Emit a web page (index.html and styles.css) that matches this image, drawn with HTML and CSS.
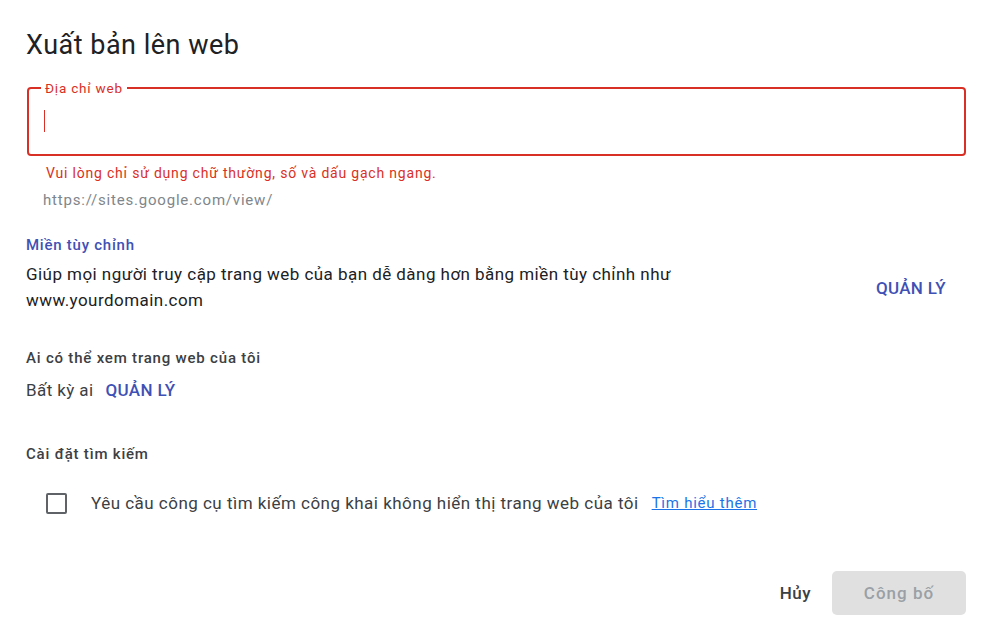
FILE: index.html
```html
<!DOCTYPE html>
<html lang="vi">
<head>
<meta charset="utf-8">
<title>Xuất bản lên web</title>
<link rel="stylesheet" href="styles.css">
</head>
<body>
<div class="dialog">
  <h1 class="title">Xuất bản lên web</h1>

  <fieldset class="field">
    <legend class="field-label">Địa chỉ web</legend>
    <span class="caret"></span>
  </fieldset>
  <div class="error">Vui lòng chỉ sử dụng chữ thường, số và dấu gạch ngang.</div>
  <div class="prefix">https://sites.google.com/view/</div>

  <div class="section-blue">Miền tùy chỉnh</div>
  <div class="domain-row">
    <p class="domain-text">Giúp mọi người truy cập trang web của bạn dễ dàng hơn bằng miền tùy chỉnh như www.yourdomain.com</p>
    <span class="manage manage-right">QUẢN LÝ</span>
  </div>

  <div class="section">Ai có thể xem trang web của tôi</div>
  <div class="viewers">
    <span class="body-text">Bất kỳ ai</span>
    <span class="manage">QUẢN LÝ</span>
  </div>

  <div class="section section-search">Cài đặt tìm kiếm</div>
  <div class="check-row">
    <span class="checkbox"></span>
    <span class="check-label">Yêu cầu công cụ tìm kiếm công khai không hiển thị trang web của tôi</span>
    <a class="learn" href="#">Tìm hiểu thêm</a>
  </div>

  <div class="actions">
    <span class="btn-cancel">Hủy</span>
    <span class="btn-publish">Công bố</span>
  </div>
</div>
</body>
</html>
```

FILE: styles.css
```css
* { box-sizing: border-box; }
html, body {
  margin: 0;
  padding: 0;
  background: #ffffff;
}
body {
  font-family: Roboto, "Liberation Sans", sans-serif;
  color: #202124;
}
.dialog {
  padding: 29px 24px 0 26px;
}
.title {
  margin: 0;
  font-size: 27px;
  font-weight: 400;
  line-height: 32px;
  letter-spacing: 0.5px;
  color: #202124;
}
.field {
  margin: 20px 0 0 1px;
  border: 2px solid #d93025;
  border-radius: 4px;
  padding: 15px 14px 19px 14px;
  height: 75px;
  min-width: 0;
}
.field-label {
  padding: 0 4px;
  margin-left: -2px;
  font-size: 13.5px;
  line-height: 14px;
  letter-spacing: 0.8px;
  color: #d93025;
}
.caret {
  display: block;
  width: 1px;
  height: 22px;
  background: #d93025;
  margin-left: 1px;
}
.error {
  margin: 9px 0 0 20px;
  font-size: 14px;
  line-height: 16px;
  letter-spacing: 0.8px;
  color: #d93025;
}
.prefix {
  margin: 10px 0 0 17px;
  font-size: 15px;
  line-height: 18px;
  letter-spacing: 0.8px;
  color: #80868b;
}
.section-blue {
  margin-top: 26px;
  font-size: 15px;
  font-weight: 500;
  line-height: 20px;
  letter-spacing: 0.75px;
  color: #3f51b5;
}
.domain-row {
  display: flex;
  align-items: center;
  justify-content: space-between;
  margin-top: 6px;
}
.domain-text {
  margin: 0;
  max-width: 700px;
  font-size: 17px;
  line-height: 26px;
  letter-spacing: 0.45px;
  color: #202124;
}
.manage {
  font-size: 17px;
  font-weight: 500;
  line-height: 24px;
  color: #3f51b5;
  letter-spacing: 0.35px;
}
.manage-right {
  padding: 2px 20px 0 0;
}
.section {
  margin-top: 35px;
  font-size: 15px;
  font-weight: 500;
  line-height: 20px;
  color: #3c4043;
  letter-spacing: 0.8px;
}
.viewers {
  display: flex;
  align-items: center;
  gap: 12px;
  margin-top: 10px;
}
.body-text {
  font-size: 17px;
  line-height: 24px;
  letter-spacing: 0.4px;
  color: #3c4043;
}
.section-search {
  margin-top: 42px;
}
.check-row {
  display: flex;
  align-items: center;
  margin: 27px 0 0 20px;
}
.checkbox {
  width: 21px;
  height: 21px;
  border: 2px solid #5f6368;
  border-radius: 2px;
  flex: none;
}
.check-label {
  margin-left: 24px;
  font-size: 17px;
  line-height: 24px;
  letter-spacing: 0.48px;
  color: #3c4043;
}
.learn {
  margin-left: 13px;
  font-size: 15px;
  line-height: 20px;
  letter-spacing: 0.75px;
  color: #1a73e8;
  text-decoration: underline;
}
.actions {
  display: flex;
  align-items: center;
  justify-content: flex-end;
  margin-top: 56px;
}
.btn-cancel {
  font-size: 17px;
  font-weight: 500;
  line-height: 24px;
  letter-spacing: 0.5px;
  color: #3c4043;
  margin-right: 21px;
}
.btn-publish {
  width: 134px;
  height: 44px;
  display: flex;
  align-items: center;
  justify-content: center;
  background: #e0e0e0;
  border-radius: 5px;
  font-size: 17px;
  font-weight: 500;
  color: #9aa0a6;
  letter-spacing: 1px;
}
```
